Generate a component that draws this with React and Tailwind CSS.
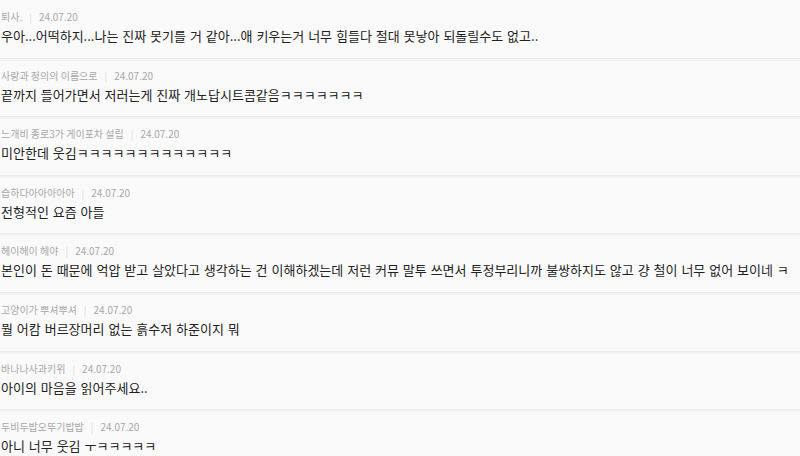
const comments = [
  { name: '퇴사.', date: '24.07.20', text: '우아...어떡하지...나는 진짜 못기를 거 같아...애 키우는거 너무 힘들다 절대 못낳아 되돌릴수도 없고..' },
  { name: '사랑과 정의의 이름으로', date: '24.07.20', text: '끝까지 들어가면서 저러는게 진짜 개노답시트콤같음ㅋㅋㅋㅋㅋㅋㅋ' },
  { name: '느개비 종로3가 게이포차 설립', date: '24.07.20', text: '미안한데 웃김ㅋㅋㅋㅋㅋㅋㅋㅋㅋㅋㅋㅋㅋ' },
  { name: '습하다아아아아아', date: '24.07.20', text: '전형적인 요즘 아들' },
  { name: '헤이헤이 헤야', date: '24.07.20', text: '본인이 돈 때문에 억압 받고 살았다고 생각하는 건 이해하겠는데 저런 커뮤 말투 쓰면서 투정부리니까 불쌍하지도 않고 걍 철이 너무 없어 보이네 ㅋ' },
  { name: '고양이가 뿌셔뿌셔', date: '24.07.20', text: '뭘 어캄 버르장머리 없는 흙수저 하준이지 뭐' },
  { name: '바나나사과키위', date: '24.07.20', text: '아이의 마음을 읽어주세요..' },
  { name: '두비두밥오뚜기밥밥', date: '24.07.20', text: '아니 너무 웃김 ㅜㅋㅋㅋㅋㅋ' },
]

export default function App() {
  return (
    <div
      className="w-[800px] h-[456px] overflow-hidden bg-[#fafafa]"
      style={{ fontFamily: '"Noto Sans CJK KR", "Noto Sans", sans-serif' }}
    >
      {comments.map((c, i) => (
        <div key={i} className="h-[58.6px] pl-[1px] pt-[10px] border-b border-[#ebebeb] shadow-[0_2px_0_#f3f3f3]">
          <div className="flex items-center text-[10px] leading-[14px] text-[#a8a8a8]">
            <span>{c.name}</span>
            <span className="mx-[7px] text-[#dcdcdc]">|</span>
            <span>{c.date}</span>
          </div>
          <p className="mt-[3px] text-[13px] leading-[18px] text-[#222] whitespace-nowrap overflow-hidden [word-spacing:1px]">
            {c.text}
          </p>
        </div>
      ))}
    </div>
  )
}
